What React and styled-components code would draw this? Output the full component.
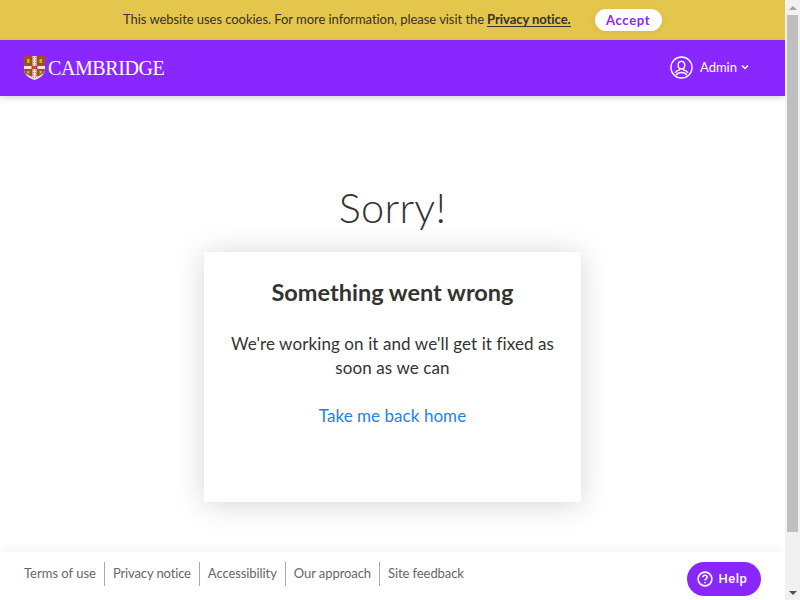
import React from "react";
import styled, { createGlobalStyle } from "styled-components";

const Global = createGlobalStyle`
  html, body { margin: 0; padding: 0; height: 100%; overflow: hidden; background: #fff; }
  #root { height: 100%; }
  * { box-sizing: border-box; }
`;
const F = `Lato, "Open Sans", sans-serif`;

const Page = styled.div`
  display: flex; width: 800px; height: 600px; font-family: ${F}; color: #333;
`;
const Main = styled.div`
  position: relative; width: 785px; height: 600px; display: flex; flex-direction: column; overflow: hidden; background: #fff;
`;
const Scrollbar = styled.div`
  width: 15px; height: 600px; background: #f1f1f1; display: flex; flex-direction: column; align-items: center;
`;
const ScrollArrow = styled.div`
  height: 15px; width: 15px; display: flex; align-items: center; justify-content: center;
  &::before {
    content: ""; border-left: 4px solid transparent; border-right: 4px solid transparent;
    ${p => p.$down ? "border-top: 4px solid #505050;" : "border-bottom: 4px solid #a3a3a3;"}
  }
`;
const ScrollTrack = styled.div`flex: 1; width: 100%; padding: 0 2px;`;
const ScrollThumb = styled.div`height: 517px; width: 11px; background: #bfbfbf;`;

const CookieBar = styled.div`
  height: 40px; flex: none; background: #e5c64c; display: flex; align-items: center; padding: 0 0 2px 123px;
  color: #333;
`;
const CookieText = styled.span`font-size: 13px; letter-spacing: -0.05px;`;
const CookieLink = styled.a`font-weight: 700; color: #333; border-bottom: 1px solid #333; margin-left: 3px; line-height: 14px; font-size: 13px; letter-spacing: -0.05px;`;
const AcceptButton = styled.button`
  margin: 2px 0 0 24px; width: 67px; height: 22px; border: 0; border-radius: 11px; background: #fff; color: #8a27ff;
  font: 700 13px ${F}; letter-spacing: 0.7px; box-shadow: 0 1px 6px rgba(0,0,0,.08); padding: 0;
`;
const Header = styled.header`
  height: 56px; flex: none; background: #8a27ff; display: flex; align-items: center; justify-content: space-between;
  padding: 0 36px 0 24px; box-shadow: 0 2px 6px rgba(0,0,0,.16); position: relative; z-index: 1;
`;
const Logo = styled.div`display: flex; align-items: center; gap: 3px;`;
const Wordmark = styled.span`font: 400 20px "Liberation Serif", serif; color: #fff; letter-spacing: -0.4px; line-height: 1;`;
const UserMenu = styled.div`display: flex; align-items: center; color: #fff; font-size: 13px; margin-top: -2px;`;
const UserName = styled.span`margin-left: 7px; margin-right: 4px;`;
const Content = styled.main`flex: 1; display: flex; flex-direction: column; align-items: center; padding-top: 86px;`;
const Title = styled.h1`margin: 0; font-size: 41.5px; font-weight: 300; line-height: 50px; color: #333; letter-spacing: 0.3px;`;
const Card = styled.section`
  margin-top: 20px; width: 377px; height: 250px; background: #fff; border-radius: 2px; box-shadow: 0 2px 30px rgba(0,0,0,.17);
  display: flex; flex-direction: column; align-items: center; padding: 24px 24px 0; text-align: center;
`;
const CardTitle = styled.h2`margin: 0; font-size: 23.5px; line-height: 32px; font-weight: 700; color: #333;`;
const CardText = styled.p`margin: 24px 0 0; font-size: 17px; line-height: 24px; color: #333; letter-spacing: 0.1px;`;
const HomeLink = styled.a`margin-top: 24px; font-size: 17px; line-height: 24px; color: #1a82f7; letter-spacing: 0.05px;`;
const Footer = styled.footer`
  position: absolute; left: 0; right: 0; bottom: 0; height: 48px; background: #fff; box-shadow: 0 -3px 10px rgba(0,0,0,.05);
  display: flex; align-items: center; padding: 0 0 4px 24px;
`;
const FooterLink = styled.a`
  font-size: 13px; color: #666; height: 24px; line-height: 22px; padding: 0 8px; border-left: 1px solid #aaa;
  letter-spacing: ${p => p.$tight ? "-0.13px" : "-0.08px"};
  &:first-child { border-left: 0; padding-left: 0; letter-spacing: 0; }
`;
const HelpButton = styled.button`
  position: absolute; right: 24px; bottom: 4px; width: 74px; height: 34px; border: 0; border-radius: 17px; background: #8a27ff; color: #fff;
  font: 500 13px Roboto, sans-serif; letter-spacing: .5px; display: flex; align-items: center; justify-content: center; gap: 6px; padding: 0 4px 1px 0;
`;

const Crest = () => (
  <svg width="21" height="24" viewBox="0 0 21 24" aria-hidden="true">
    <path d="M0 0H21V13C21 19 16 22 10.5 24C5 22 0 19 0 13Z" fill="#eee6df" />
    <path d="M0 0H8.5V10H0Z M12.5 0H21V10H12.5Z M0 13H8.5V21C4 19 0 17 0 13Z M12.5 13H21C21 17 17 19 12.5 21Z" fill="#b8432a" />
    <path d="M1.5 1.5H7V8.5H1.5Z M14 1.5H19.5V8.5H14Z M1.5 14.5H7V18H1.5Z M14 14.5H19.5V18H14Z" fill="#7d6410" />
    <path d="M3 3H5.5V7H3Z M15.5 3H18V7H15.5Z M3 15H5.5V17.5H3Z M15.5 15H18V17.5H15.5Z" fill="#dcae22" />
    <path d="M7.5 10H13.5V13H7.5Z" fill="#b8432a" />
    <path d="M9.5 1V23 M11.5 1V23" stroke="#8c8c8c" strokeWidth="1" strokeDasharray="1 1.5" />
  </svg>
);
const UserIcon = () => (
  <svg width="23" height="23" viewBox="0 0 24 24" fill="none" stroke="#fff" strokeWidth="1.4" aria-hidden="true">
    <circle cx="12" cy="12" r="11" />
    <path d="M12 5.6c-2.2 0-3.5 1.7-3.5 3.9S9.9 13.6 12 13.6s3.5-1.9 3.5-4.1-1.3-3.9-3.5-3.9Z" />
    <path d="M10 13v1.4c-2 .5-3.8 1.3-4.6 3.2 M14 13v1.4c2 .5 3.8 1.3 4.6 3.2 M6.5 20c1-2 3.5-2.8 5.500-2.800s4.500 .8 5.500 2.800" />
  </svg>
);
const Chevron = () => (
  <svg width="8" height="6" viewBox="0 0 8 6" fill="none" stroke="#fff" strokeWidth="1.5" aria-hidden="true"><path d="M1 1.500 4 4.500 7 1.500" /></svg>
);
const HelpIcon = () => (
  <svg width="16" height="16" viewBox="0 0 16 16" fill="none" stroke="#fff" strokeWidth="1.6" aria-hidden="true">
    <circle cx="8" cy="8" r="6.9" />
    <path d="M5.9 6.3c0-1.3 1-2 2.1-2s2.1.7 2.1 1.9c0 1.6-2.1 1.600-2.100 3.200" />
    <path d="M8 11v1.300" />
  </svg>
);

export default function App() {
  return (
    <Page>
      <Global />
      <Main>
        <CookieBar>
          <CookieText>This website uses cookies. For more information, please visit the</CookieText>
          <CookieLink>Privacy notice.</CookieLink>
          <AcceptButton>Accept</AcceptButton>
        </CookieBar>
        <Header>
          <Logo><Crest /><Wordmark>CAMBRIDGE</Wordmark></Logo>
          <UserMenu><UserIcon /><UserName>Admin</UserName><Chevron /></UserMenu>
        </Header>
        <Content>
          <Title>Sorry!</Title>
          <Card>
            <CardTitle>Something went wrong</CardTitle>
            <CardText>We're working on it and we'll get it fixed as soon as we can</CardText>
            <HomeLink>Take me back home</HomeLink>
          </Card>
        </Content>
        <Footer>
          <FooterLink>Terms of use</FooterLink>
          <FooterLink $tight>Privacy notice</FooterLink>
          <FooterLink>Accessibility</FooterLink>
          <FooterLink>Our approach</FooterLink>
          <FooterLink>Site feedback</FooterLink>
        </Footer>
        <HelpButton><HelpIcon />Help</HelpButton>
      </Main>
      <Scrollbar>
        <ScrollArrow />
        <ScrollTrack><ScrollThumb /></ScrollTrack>
        <ScrollArrow $down />
      </Scrollbar>
    </Page>
  );
}
